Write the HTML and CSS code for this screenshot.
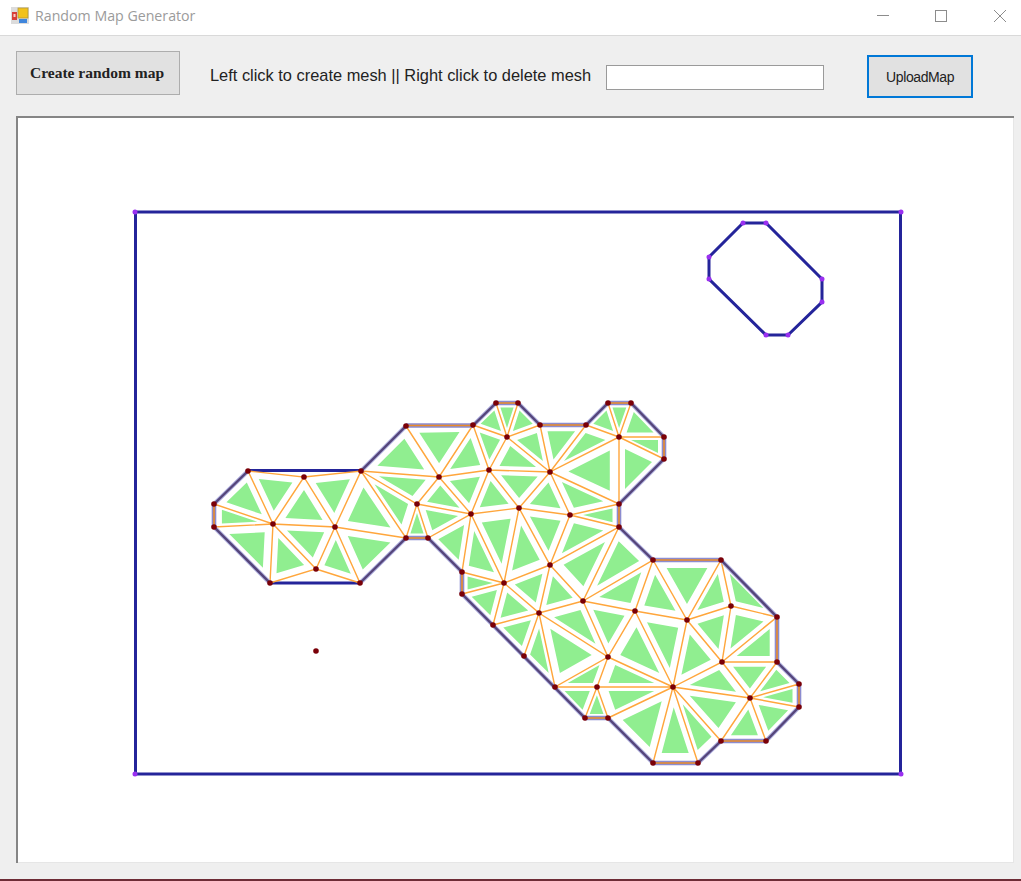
FILE: index.html
```html
<!DOCTYPE html>
<html lang="en">
<head>
<meta charset="utf-8">
<title>Random Map Generator</title>
<link rel="stylesheet" href="styles.css">
</head>
<body>
<div class="window">
  <header class="titlebar">
    <svg class="app-icon" viewBox="0 0 18 17" width="18" height="17">
      <rect x="0" y="0" width="18" height="17" fill="#dcdcdc"/>
      <rect x="1" y="5" width="5" height="8" fill="#d8403a"/>
      <rect x="2.500" y="7" width="2" height="3" fill="#f7d0c8"/>
      <rect x="7" y="1" width="10" height="10" fill="#f2c21c" stroke="#b59a3c" stroke-width=".8"/>
      <rect x="8" y="12" width="8" height="4" fill="#3f86dc"/>
    </svg>
    <span class="title">Random Map Generator</span>
    <div class="controls">
      <svg class="ctl ctl-min" viewBox="0 0 12 12" width="12" height="12"><path d="M0 5.500H12"/></svg>
      <svg class="ctl" viewBox="0 0 12 12" width="12" height="12"><rect x=".5" y=".5" width="11" height="11"/></svg>
      <svg class="ctl" viewBox="0 0 12 12" width="12" height="12"><path d="M0 0L12 12M12 0L0 12"/></svg>
    </div>
  </header>
  <main class="client">
    <div class="toolbar">
      <button class="btn btn-create" type="button">Create random map</button>
      <span class="hint">Left click to create mesh || Right click to delete mesh</span>
      <input class="field" type="text" aria-label="Map file">
      <button class="btn btn-upload" type="button">UploadMap</button>
    </div>
    <div class="canvas">
      <svg class="map" viewBox="16 116 998 747" width="998" height="747">
        <defs>
          <path id="mesh" d="M214 504L248 471L273 524ZM214 504L273 524L214 527ZM214 527L273 524L270 583ZM248 471L304 477L273 524ZM304 477L335 527L273 524ZM304 477L361 471L335 527ZM273 524L335 527L316 569ZM273 524L316 569L270 583ZM316 569L335 527L360 583ZM335 527L406 538L360 583ZM335 527L361 471L406 538ZM361 471L417 504L406 538ZM361 471L439 477L417 504ZM361 471L406 426L439 477ZM406 426L473 425L439 477ZM417 504L406 538L428 538ZM473 425L489 470L439 477ZM473 425L507 437L489 470ZM473 425L496 403L507 437ZM496 403L518 403L507 437ZM518 403L540 425L507 437ZM507 437L540 425L550 472ZM507 437L550 472L489 470ZM540 425L586 425L550 472ZM586 425L619 437L550 472ZM586 425L608 403L619 437ZM608 403L631 403L619 437ZM631 403L664 437L619 437ZM619 437L664 437L664 459ZM619 437L664 459L619 504ZM619 437L619 504L550 472ZM550 472L619 504L570 515ZM550 472L570 515L519 508ZM489 470L550 472L519 508ZM489 470L519 508L471 514ZM439 477L489 470L471 514ZM439 477L471 514L417 504ZM417 504L471 514L428 538ZM428 538L471 514L462 572ZM471 514L504 583L462 572ZM471 514L519 508L504 583ZM519 508L550 565L504 583ZM519 508L570 515L550 565ZM570 515L619 527L550 565ZM570 515L619 504L619 527ZM619 527L583 601L550 565ZM619 527L653 560L583 601ZM462 572L504 583L462 594ZM462 594L504 583L493 625ZM504 583L539 613L493 625ZM504 583L550 565L539 613ZM550 565L583 601L539 613ZM583 601L608 657L539 613ZM583 601L635 611L608 657ZM583 601L653 560L635 611ZM653 560L687 620L635 611ZM653 560L721 560L687 620ZM721 560L731 606L687 620ZM721 560L777 617L731 606ZM731 606L777 617L722 662ZM731 606L722 662L687 620ZM687 620L722 662L673 687ZM635 611L687 620L673 687ZM635 611L673 687L608 657ZM493 625L539 613L524 656ZM524 656L539 613L555 687ZM539 613L608 657L555 687ZM608 657L597 687L555 687ZM608 657L673 687L597 687ZM555 687L597 687L585 718ZM597 687L608 718L585 718ZM597 687L673 687L608 718ZM608 718L673 687L653 763ZM673 687L698 763L653 763ZM673 687L721 741L698 763ZM673 687L750 698L721 741ZM722 662L750 698L673 687ZM777 617L777 662L722 662ZM722 662L777 662L750 698ZM777 662L799 684L750 698ZM799 684L799 707L750 698ZM799 707L766 741L750 698ZM750 698L766 741L721 741Z"/>
          <path id="diag" d="M361 471L406 426M473 425.500L496 403M518 403L540 425M586 425L608 403M631 403L664 437M664 459L619 504M619 527L653 560M721 560L777 617M777 662L799 684M799 707L766 741M721 741L698 763M653 763L608 718M585 718L462 594M462 572L428 538M406 538L360 583M270 583L214 527M214 504L248 471"/>
          <path id="flat" d="M406 425.500H473M496 403H518M540 425H586M608 403H631M664 437V459M619 504V527M653 560H721M777 617V662M799 684V707M766 741H721M698 763H653M608 718H585M462 594V572M428 538H406M214 527V504"/>
        </defs>
        <path id="cells" class="mesh-fill"/>
        <rect class="outline" x="135.500" y="212" width="765" height="562"/>
        <polygon class="outline" points="743,223 766,223 822,279 822,302 788,335 766,335 709,279 709,257"/>
        <path class="outline" d="M248 470.500H361M270 583H360"/>
        <use class="mesh-lines" href="#mesh"/>
        <use class="edge-halo" href="#diag"/>
        <use class="edge-halo-flat" href="#flat"/>
        <use class="edge-mix" href="#diag"/>
        <use class="edge-flat" href="#flat"/>
        <path class="dots-corner" d="M135 212h0M901 212h0M135 774h0M901 774h0M743 223h0M766 223h0M822 279h0M822 302h0M788 335h0M766 335h0M709 279h0M709 257h0"/>
        <path class="dots-mesh" d="M248 471h0M304 477h0M361 471h0M406 426h0M214 504h0M214 527h0M273 524h0M335 527h0M417 504h0M439 477h0M406 538h0M428 538h0M316 569h0M270 583h0M360 583h0M473 425h0M496 403h0M518 403h0M507 437h0M540 425h0M586 425h0M608 403h0M631 403h0M619 437h0M664 437h0M664 459h0M550 472h0M489 470h0M619 504h0M619 527h0M570 515h0M519 508h0M471 514h0M462 572h0M462 594h0M504 583h0M550 565h0M653 560h0M583 601h0M635 611h0M539 613h0M493 625h0M524 656h0M608 657h0M555 687h0M597 687h0M673 687h0M585 718h0M608 718h0M721 560h0M731 606h0M687 620h0M777 617h0M777 662h0M722 662h0M799 684h0M799 707h0M750 698h0M766 741h0M721 741h0M698 763h0M653 763h0M316 651h0"/>
      </svg>
    </div>
  </main>
  <div class="bottom-edge"></div>
</div>
<script src="map.js"></script>
</body>
</html>
```

FILE: styles.css
```css
* { box-sizing: border-box; }

html, body {
  margin: 0;
  height: 881px;
  overflow: hidden;
  background: #efefef;
}

.window {
  display: flex;
  flex-direction: column;
  height: 881px;
  font-family: "Liberation Sans", Arial, sans-serif;
}

.titlebar {
  display: flex;
  align-items: center;
  height: 36px;
  flex: none;
  padding: 0 15px 5px 11px;
  background: #fff;
  border-bottom: 1px solid #d9d9d9;
}

.app-icon { flex: none; }

.title {
  margin-left: 6px;
  font: 14.200px "Open Sans", sans-serif;
  color: #9b9b9b;
}

.controls {
  display: flex;
  gap: 47px;
  margin-left: auto;
  padding-top: 1px;
}

.ctl { fill: none; stroke: #8c8c8c; stroke-width: 1; }
.ctl-min { margin-right: -1px; }

.client {
  flex: 1;
  display: flex;
  flex-direction: column;
  padding: 15px 7px 16px 16px;
  background: #efefef;
}

.toolbar {
  display: flex;
  align-items: flex-start;
  height: 47px;
  flex: none;
}

.btn {
  padding: 0;
  background: #e1e1e1;
  color: #222;
  border: 1px solid #adadad;
}

.btn-create {
  width: 164px;
  height: 44px;
  padding-right: 2px;
  font: bold 15.500px "Liberation Serif", serif;
}

.hint {
  margin: 15px 0 0 30px;
  font-size: 16.400px;
  color: #222;
  white-space: nowrap;
}

.field {
  width: 218px;
  height: 25px;
  margin: 14px 0 0 15px;
  background: #fff;
  border: 1px solid #9a9a9a;
  outline: none;
}

.btn-upload {
  width: 106px;
  height: 43px;
  margin: 4px 0 0 43px;
  font-size: 14px;
  letter-spacing: -0.4px;
  border: 2px solid #0078d7;
}

.canvas {
  width: 998px;
  height: 747px;
  margin-top: 18px;
  flex: none;
  background: #fff;
  box-shadow: inset 2px 2px 0 #858585, inset -1px -1px 0 #e6e6e6;
}

.map { display: block; }

.mesh-fill { fill: #90ee90; }

.outline {
  fill: none;
  stroke: #24249a;
  stroke-width: 3;
}

.mesh-lines {
  fill: none;
  stroke: #ffa63c;
  stroke-width: 1.400;
}

.edge-halo {
  fill: none;
  stroke: #aeaede;
  stroke-width: 4.200;
}

.edge-halo-flat {
  fill: none;
  stroke: #8c8ccf;
  stroke-width: 4.600;
}

.edge-mix {
  fill: none;
  stroke: #55457a;
  stroke-width: 2.400;
}

.edge-flat {
  fill: none;
  stroke: #e98a28;
  stroke-width: 1.600;
}

.dots-corner {
  fill: none;
  stroke: #9a30f0;
  stroke-width: 5;
  stroke-linecap: round;
}

.dots-mesh {
  fill: none;
  stroke: #7a0008;
  stroke-width: 5.600;
  stroke-linecap: round;
}

.bottom-edge {
  height: 2px;
  flex: none;
  background: #6e2c36;
}
```

FILE: map.js
```js
// Each green cell is its mesh triangle shrunk to 60% about the centroid.
const SCALE = 0.6;
const source = document.getElementById("mesh").getAttribute("d");

const cells = source.split("Z").filter(Boolean).map((tri) => {
  const pts = tri.replace(/[ML]/g, " ").trim().split(/\s+/).map(Number);
  const cx = (pts[0] + pts[2] + pts[4]) / 3;
  const cy = (pts[1] + pts[3] + pts[5]) / 3;
  const at = (i) =>
    `${(cx + (pts[i] - cx) * SCALE).toFixed(1)} ${(cy + (pts[i + 1] - cy) * SCALE).toFixed(1)}`;
  return `M${at(0)}L${at(2)}L${at(4)}Z`;
});

document.getElementById("cells").setAttribute("d", cells.join(""));
```
